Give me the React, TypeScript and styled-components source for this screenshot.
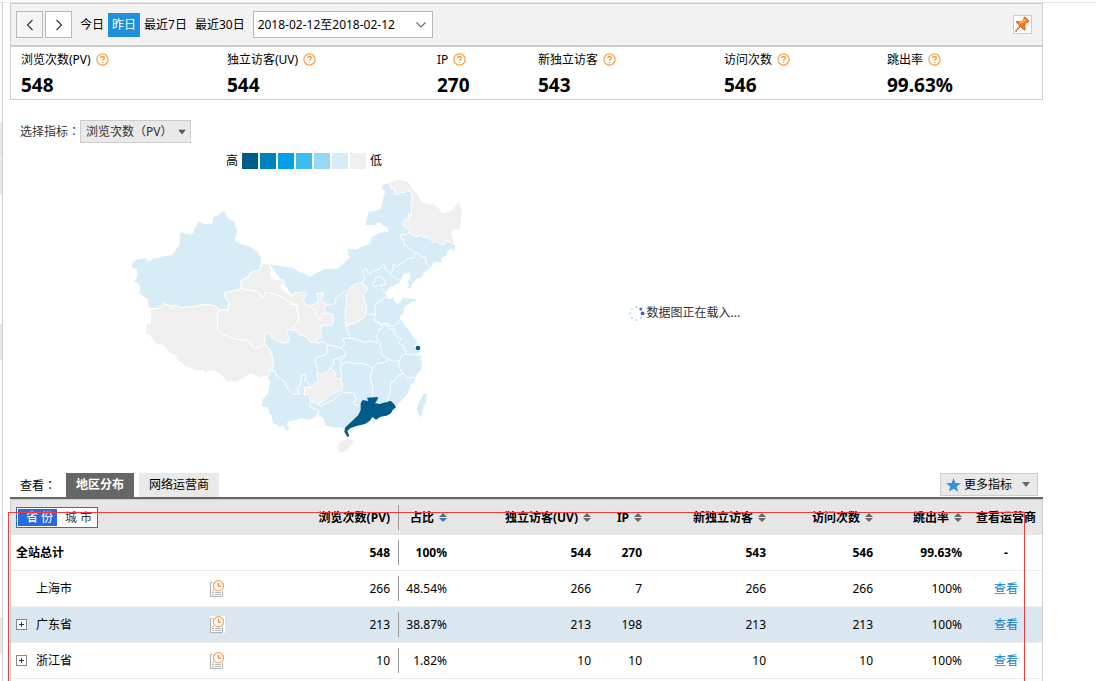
import React from "react";
import styled, { createGlobalStyle, css } from "styled-components";

const GlobalStyle = createGlobalStyle`
  *, *::before, *::after { box-sizing: border-box; }
  body {
    margin: 0;
    background: #fff;
    color: #000;
    font: 12px/16px "Noto Sans", "Noto Sans CJK SC", sans-serif;
  }
  button, select { font: inherit; color: inherit; }
`;

const Page = styled.div`
  display: flex;
  min-height: 100vh;
  padding-top: 2px;
  overflow: hidden;
`;

const Rail = styled.aside`
  flex: none;
  width: 2px;
  border-top: 1px solid #e5e5e5;
`;

const RailItem = styled.div<{ $gap: number }>`
  height: 36px;
  margin-top: ${(p) => p.$gap}px;
  background: #e8e8e8;
`;

const Main = styled.main`
  flex: 1;
  display: flex;
  flex-direction: column;
  min-width: 0;
  padding: 0 53px 0 7px;
  border-top: 1px solid #e5e5e5;
  border-left: 1px solid #ccc;
`;

const Toolbar = styled.div`
  display: flex;
  align-items: center;
  height: 44px;
  padding: 0 10px 0 5px;
  background: #f2f2f2;
  border: 1px solid #ccc;
  border-bottom-width: 2px;
`;

const StepButton = styled.button<{ $muted?: boolean }>`
  display: flex;
  align-items: center;
  justify-content: center;
  width: 27px;
  height: 27px;
  margin-right: 2px;
  padding: 0;
  background: ${(p) => (p.$muted ? "#f5f5f5" : "#fff")};
  border: 1px solid #b8b8b8;
`;

const RangeList = styled.div`
  display: flex;
  margin: 0 4px 0 2px;
`;

const RangeButton = styled.button<{ $active?: boolean }>`
  height: 24px;
  padding: 0 4px;
  border: 0;
  line-height: 24px;
  white-space: nowrap;
  background: ${(p) => (p.$active ? "#1e90dc" : "transparent")};
  color: ${(p) => (p.$active ? "#fff" : "#000")};
`;

const SelectWrap = styled.span`
  position: relative;
  display: inline-flex;
`;

const SelectArrow = styled.svg`
  position: absolute;
  top: 50%;
  right: 5px;
  transform: translateY(-50%);
  pointer-events: none;
`;

const DateSelect = styled.select`
  appearance: none;
  width: 180px;
  height: 27px;
  padding: 0 4px;
  background: #fff;
  border: 1px solid #b8b8b8;
  border-radius: 0;
`;

const PinButton = styled.button`
  display: flex;
  width: 19px;
  height: 19px;
  margin-left: auto;
  padding: 0;
  background: #fff;
  border: 1px solid #ccc;
`;

const Metrics = styled.dl`
  display: grid;
  grid-template-columns: 206fr 210fr 101fr 186fr 163fr 155fr;
  height: 53px;
  margin: 0;
  padding: 4px 0 0 10px;
  border: 1px solid #ccc;
  border-top: 0;
`;

const MetricName = styled.dt`
  display: flex;
  align-items: center;
  gap: 5px;
  height: 17px;
  white-space: nowrap;
`;

const MetricValue = styled.dd`
  margin: 4px 0 0;
  font-size: 19px;
  font-weight: 700;
  line-height: 26px;
`;

const FilterRow = styled.div`
  display: flex;
  align-items: center;
  margin-top: 20px;
  padding-left: 10px;
  color: #333;
`;

const FilterLabel = styled.label`
  width: 60px;
  white-space: nowrap;
`;

/* The TC face centres full-width punctuation in its em box. */
const Colon = styled.span`
  font-family: "Noto Sans CJK TC", sans-serif;
`;

const FilterSelect = styled.select`
  appearance: none;
  width: 111px;
  height: 23px;
  padding: 0 5px;
  background: #e9e9e9;
  border: 1px solid #ccc;
  border-radius: 0;
  font-family: "Noto Sans", "Noto Sans CJK TC", sans-serif;
`;

const Charts = styled.section`
  display: grid;
  grid-template-columns: 1fr 1fr;
  height: 320px;
  margin-top: 10px;
`;

const Legend = styled.div`
  display: flex;
  align-items: center;
  gap: 4px;
  height: 16px;
  padding-left: 216px;
`;

const Swatches = styled.div`
  display: flex;
  gap: 2px;
`;

const Swatch = styled.span<{ $color: string }>`
  width: 16px;
  height: 16px;
  background: ${(p) => p.$color};
`;

const MapSvg = styled.svg`
  display: block;
  width: 350px;
  height: 290px;
  margin: 1px 0 0 110px;
`;

const Loading = styled.div`
  display: flex;
  align-items: center;
  gap: 2px;
  padding-left: 101px;
  color: #333;
`;

const Tabs = styled.div`
  display: flex;
  align-items: flex-start;
  height: 26px;
  padding: 0 5px 0 10px;
  border-bottom: 2px solid #666;
`;

const TabsLabel = styled.span`
  width: 46px;
  line-height: 24px;
`;

const Tab = styled.button<{ $active?: boolean }>`
  height: 24px;
  margin-right: 5px;
  padding: 0 10px;
  border: 0;
  line-height: 24px;
  background: ${(p) => (p.$active ? "#666" : "#e9e9e9")};
  color: ${(p) => (p.$active ? "#fff" : "#000")};
  font-weight: ${(p) => (p.$active ? 700 : 400)};
`;

const MoreButton = styled.button`
  display: flex;
  align-items: center;
  gap: 3px;
  width: 98px;
  height: 23px;
  margin-left: auto;
  padding: 0 7px 0 5px;
  background: #e9e9e9;
  border: 1px solid #ccc;
  white-space: nowrap;

  svg:last-child { margin-left: auto; }
`;

const TableFrame = styled.section`
  position: relative;
  flex: 1;
  border: 1px solid #ccc;
  border-top: 0;
  border-bottom: 0;
`;

const Highlight = styled.div`
  position: absolute;
  top: 13px;
  bottom: -8px;
  left: -3px;
  right: 17px;
  border: 1px solid #f23a3a;
  pointer-events: none;
`;

const Table = styled.table`
  width: 100%;
  table-layout: fixed;
  border-collapse: separate;
  border-spacing: 0;
`;

const cell = css`
  height: 36px;
  padding: 0 8px 0 0;
  text-align: right;
  white-space: nowrap;
`;

const divider = css`
  background: linear-gradient(#999, #999) left center / 1px 25px no-repeat;
`;

const HeadCell = styled.th<{ $align?: string; $divided?: boolean }>`
  ${cell}
  text-align: ${(p) => p.$align ?? "right"};
  padding-left: ${(p) => (p.$align === "left" ? 5 : 0)}px;
  padding-right: ${(p) => (p.$align === "center" ? 0 : 8)}px;
  border-top: 1px solid #ccc;
  ${(p) => p.$divided && divider}
`;

const HeadRow = styled.tr`
  background: #e6e6e6;
`;

const Cell = styled.td<{ $align?: string; $divided?: boolean }>`
  ${cell}
  text-align: ${(p) => p.$align ?? "right"};
  padding-left: ${(p) => (p.$align === "left" ? 5 : 0)}px;
  padding-right: ${(p) => (p.$align === "center" ? 0 : 8)}px;
  border-bottom: 1px solid #eee;
  ${(p) => p.$divided && divider}
`;

const Row = styled.tr<{ $total?: boolean; $hover?: boolean }>`
  font-weight: ${(p) => (p.$total ? 700 : 400)};
  background: ${(p) => (p.$hover ? "#dbe7f0" : "#fff")};
`;

const SortButton = styled.button`
  display: inline-flex;
  align-items: center;
  gap: 5px;
  padding: 0;
  border: 0;
  background: none;
  font-weight: 700;
`;

const Switcher = styled.div`
  display: inline-flex;
  width: 82px;
  height: 21px;
  padding: 1px;
  background: #fff;
  border: 1px solid #2a6ae0;
  font-weight: 400;
  vertical-align: middle;
`;

const SwitchButton = styled.button<{ $active?: boolean }>`
  width: 40px;
  height: 17px;
  padding: 0 0 0 4px;
  border: 0;
  line-height: 17px;
  background: ${(p) => (p.$active ? "#2a6ae0" : "#fff")};
  color: ${(p) => (p.$active ? "#fff" : "#333")};
`;

const NameBox = styled.span`
  display: grid;
  grid-template-columns: 11px auto;
  align-items: center;
  justify-content: start;
  gap: 9px;
`;

const ExpandButton = styled.button`
  display: flex;
  width: 11px;
  height: 11px;
  padding: 0;
  background: #fff;
  border: 0;
`;

const HistorySvg = styled.svg`
  display: block;
  margin: 0 auto;
`;

const ViewLink = styled.a`
  color: #0a82cf;
  text-decoration: none;
`;

const HelpIcon = () => (
  <svg width="13" height="13" viewBox="0 0 13 13" aria-hidden="true">
    <circle cx="6.5" cy="6.5" r="5.6" fill="#fff" stroke="#f5a04a" strokeWidth="1.2" />
    <path d="M4.6 5 C4.6 3 8.5 3 8.4 5 C8.3 6.2 6.5 6.2 6.5 7.8 M6.5 8.9 V10" fill="none" stroke="#ff9a1f" strokeWidth="1.3" />
  </svg>
);

const Chevron = ({ d, color = "#333" }: { d: string; color?: string }) => (
  <svg width="12" height="12" viewBox="0 0 12 12" aria-hidden="true">
    <path d={d} fill="none" stroke={color} strokeWidth="1.1" />
  </svg>
);

const PinIcon = () => (
  <svg width="17" height="17" viewBox="0 0 17 17" aria-hidden="true">
    <path d="M1.5 15.5 L6 10.5" stroke="#c8501e" strokeWidth="1.6" strokeDasharray="2 0.6" />
    <path d="M2 5.5 L7 5.8 L10 3.6 L9.8 1.6 L11 1 L14.8 4.8 L14.2 6.2 L12.4 6.4 L10.8 9 L11.2 13.8 L10 14 L7 11 L3 7Z" fill="#f57c1c" stroke="#cf4a1a" strokeWidth="0.7" />
    <path d="M6 7.2 L10 5.2 L11.6 3.2" fill="none" stroke="#ffc06a" strokeWidth="1.4" />
  </svg>
);

const StarIcon = () => (
  <svg width="15" height="14" viewBox="0 0 15 14" aria-hidden="true">
    <path d="M7.5 0 L9.4 4.9 L15 5.2 L10.7 8.5 L12.2 13.8 L7.5 10.8 L2.8 13.8 L4.3 8.5 L0 5.2 L5.6 4.9Z" fill="#2f93da" />
  </svg>
);

const CaretIcon = () => (
  <svg width="8" height="5" viewBox="0 0 8 5" aria-hidden="true">
    <path d="M0 0 H8 L4 5Z" fill="#666" />
  </svg>
);

const SortIcon = ({ active }: { active?: boolean }) => (
  <svg width="8" height="9" viewBox="0 0 8 9" aria-hidden="true">
    <path d="M0 4 L4 0 L8 4Z" fill="#666" />
    <path d="M0 5 L4 9 L8 5Z" fill={active ? "#2a78ee" : "#666"} />
  </svg>
);

const PlusIcon = () => (
  <svg width="11" height="11" viewBox="0 0 11 11" aria-hidden="true">
    <rect x="0.5" y="0.5" width="10" height="10" fill="#fff" stroke="#888" />
    <path d="M3 5.5 H8 M5.5 3 V8" stroke="#333" />
  </svg>
);

const HistoryIcon = () => (
  <HistorySvg width="15" height="17" viewBox="0 0 15 17" aria-hidden="true">
    <rect width="15" height="17" fill="#fff" />
    <path d="M2.5 2.5 H0.5 V16.5 H12.5 V11" fill="none" stroke="#b0b0b0" />
    <path d="M2 10.5 H4 M2 12.5 H4 M5 12.5 H11 M2 14.5 H4 M5 14.5 H11" stroke="#b5b5b5" />
    <circle cx="8.5" cy="5.8" r="5.1" fill="#fff" stroke="#f6a869" strokeWidth="1.3" />
    <path d="M8.5 2.8 V6.2 H11.2" fill="none" stroke="#ee8a35" strokeWidth="1.2" />
  </HistorySvg>
);

const SpinnerIcon = () => (
  <svg width="17" height="17" viewBox="0 0 17 17" aria-hidden="true">
    <g fill="#bfdcf5">
      <circle cx="8.5" cy="2.2" r="1.2" />
      <circle cx="3.8" cy="4" r="1.1" />
      <circle cx="2" cy="8.5" r="1.2" />
      <circle cx="3.8" cy="13" r="1.2" />
      <circle cx="8.5" cy="15" r="1.2" />
      <circle cx="13" cy="13" r="1.2" />
    </g>
    <circle cx="12.8" cy="4" r="1.5" fill="#3f74cf" />
    <circle cx="14.6" cy="8.4" r="1.9" fill="#2f63c8" />
  </svg>
);

const BLUE = "#d7ecf7";
const GREY = "#efefef";
const DARK = "#005c89";

const ChinaMap = () => (
  <MapSvg viewBox="0 0 1050 870" role="img" aria-label="浏览次数(PV)">
    <g stroke="#fff" strokeWidth="3" strokeLinejoin="round">
      <path
        fill={BLUE}
        stroke="none"
        d="M448 283 L490 290 515 292 535 305 550 309 570 320 590 309 615 297 650 296 665 285 690 262 683 250 685 235 707 240 725 230 750 222 755 202 780 188 807 185 803 174 788 167 780 157 770 158 765 165 736 165 746 125 772 122 782 118 788 90 795 65 786 55 788 45 807 38 880 60 905 97 965 128 1027 115 995 190 1005 225 1004 242 1000 245 997 236 990 236 982 245 980 255 965 265 965 275 940 277 935 290 910 310 905 322 890 326 875 345 874 354 860 356 868 346 862 337 870 325 871 312 865 308 850 312 845 325 838 340 810 352 798 365 798 378 807 387 822 382 822 392 830 401 840 399 845 386 855 383 888 387 888 394 876 395 860 405 850 415 852 425 840 440 840 448 852 462 865 480 885 508 892 512 886 520 895 515 882 530 900 538 900 546 882 556 905 558 902 570 906 573 903 600 888 618 882 640 872 642 870 655 860 675 845 690 828 708 765 740 675 775 655 772 640 773 615 765 612 745 600 737 590 735 580 745 560 750 545 743 530 750 510 752 503 757 500 765 508 770 505 780 498 782 490 765 480 772 468 763 458 760 455 735 448 732 447 720 440 710 425 712 427 690 445 670 450 635 441 622 450 598 458 605 460 570 434 520 435 488 520 380Z"
      />
      <path
        fill={BLUE}
        d="M35 280 L50 268 78 263 83 272 92 270 100 264 112 263 125 258 155 254 165 240 178 222 178 187 188 186 200 191 217 191 220 178 237 152 250 160 270 162 277 158 279 140 295 134 308 122 315 124 325 145 345 155 354 185 345 205 348 215 370 223 388 227 415 247 425 265 424 280 421 300 405 303 392 308 382 324 368 328 361 340 364 356 340 363 314 367 315 380 328 400 322 422 308 418 298 420 288 408 270 405 240 405 230 410 205 411 180 413 165 405 155 410 130 401 115 415 95 418 84 408 82 388 70 380 56 370 60 355 55 342 40 335 50 322 50 298 36 296Z"
      />
      <path
        fill={GREY}
        d="M95 418 L115 415 130 401 155 410 165 405 180 413 205 411 230 410 240 405 270 405 288 408 298 420 292 435 293 480 305 492 322 498 345 508 385 511 400 533 420 531 432 522 445 532 455 550 460 575 458 602 450 600 445 622 430 617 420 625 410 620 390 612 375 622 350 636 318 636 312 625 300 612 280 602 262 604 255 618 252 602 228 602 212 594 198 592 185 578 170 570 165 555 150 550 130 525 110 525 98 510 90 498 75 490 80 460 90 462 93 445 90 425Z"
      />
      <path
        fill={GREY}
        d="M298 420 L308 418 322 422 328 400 315 380 314 367 340 363 364 356 385 360 410 364 425 378 433 380 434 367 450 370 465 372 490 383 510 398 526 403 533 425 538 450 520 470 524 481 498 478 500 490 510 505 505 515 490 520 470 512 455 502 452 490 435 488 434 522 420 531 400 533 385 511 345 508 322 498 305 492 293 480 292 435Z"
      />
      <path
        fill={GREY}
        d="M424 281 L446 282 455 300 452 315 460 327 490 330 493 338 482 348 495 365 515 380 522 369 545 368 553 363 561 372 550 385 555 403 570 410 575 405 590 400 595 385 590 372 608 368 610 380 603 388 615 400 620 404 612 415 618 430 638 432 640 462 630 467 603 465 602 485 606 500 595 505 590 517 570 517 560 500 540 495 530 485 524 481 520 470 538 450 533 425 526 403 510 398 490 383 465 372 434 367 433 380 425 378 410 364 385 360 364 356 361 340 368 328 382 324 392 308 405 303 421 300Z"
      />
      <path
        fill="none"
        d="M570 410 L585 418 590 438 598 450 606 445 604 432 615 430 M510 403 L530 403 535 430 538 445"
      />
      <g transform="translate(510 0)">
        <path
          fill={GREY}
          d="M297 38 L325 28 345 32 355 35 370 60 385 75 395 97 430 103 445 110 455 128 478 127 495 108 510 95 513 113 517 115 512 177 490 180 485 190 495 225 470 212 462 225 450 222 440 213 430 217 412 200 400 203 398 192 385 200 372 198 357 187 362 178 352 175 338 165 342 152 355 145 355 130 365 138 362 100 367 85 364 65 350 62 345 68 332 67 325 74 315 72 315 57 302 54Z"
        />
        <path
          fill={GREY}
          d="M180 355 L195 342 215 338 222 345 232 350 230 362 220 375 223 395 230 405 225 440 208 452 190 458 168 468 165 430 170 400 168 378Z"
        />
        <g fill="none">
          <path d="M357 187 L350 193 330 195 333 204 340 207 343 225 352 227 355 235 374 247 388 252 395 262 405 260 410 283 422 291" />
          <path d="M374 247 L372 263 355 265 335 280 318 290 312 282 308 285 310 297 303 310 305 316 327 330" />
          <path d="M305 312 L290 302 280 280 270 297 255 300 240 310 232 308 230 295 220 300 218 310 224 320 222 330 215 340" />
          <path d="M255 325 L270 317 275 325 285 330 285 345 270 345 258 350 247 347 248 338 256 335Z M275 345 L277 362 290 372" />
          <path d="M168 360 L150 375 137 385 137 400 120 405 108 403" />
          <path d="M290 380 L260 400 253 412 257 430 250 434 225 430 M257 430 L253 452 265 460 275 467 283 458 290 468 302 468" />
        </g>
      </g>
      <g transform="translate(510 390)">
        <g fill="none">
          <path d="M168 78 L180 72 200 68 215 58 M168 78 L175 100 182 115 200 118 225 128 240 122 262 128" />
          <path d="M253 62 L270 68 275 75 290 68 300 78 310 80 318 72 325 72 327 60" />
          <path d="M275 75 L277 85 265 88 268 98 258 108 264 125 272 128 272 145 278 152 272 160 285 172 298 178 310 185 330 180 333 168 345 162 350 152 340 148 342 138 325 130 335 115 318 110 312 90 300 88 285 70" />
          <path d="M182 115 L157 115 165 130 153 145 168 160 163 172 150 180 155 193 175 185 200 192 220 190 240 200 247 205 262 190 280 188 298 178" />
          <path d="M168 165 L150 172 130 180 132 195 118 207 M90 127 L80 132 M90 127 L100 125 112 135 M155 145 L130 137 112 135 112 150 108 165 77 172 77 190 82 205 80 220" />
          <path d="M-52 215 L-45 210 -42 225 -30 235 -15 245 -5 270 10 283 28 280 22 265 30 255 35 225 48 222 45 240 60 255" />
          <path d="M62 305 L58 320 85 330 85 342 76 348 M85 312 L90 318 130 300 155 275 175 280 190 275 200 300 190 305 195 315 215 315" />
          <path d="M152 240 L155 220 150 205 155 193 M247 205 L240 235 248 262 247 292" />
          <path d="M330 180 L325 195 332 210 340 220 320 230 312 245 302 245 300 280 292 303 M332 210 L345 225 350 235 375 232 M345 162 L372 163" />
        </g>
        <path
          fill={GREY}
          d="M80 222 L85 218 95 225 110 217 122 205 135 215 138 235 152 240 157 255 155 270 130 280 110 295 85 312 62 305 60 290 52 282 42 285 45 262 60 262 85 243Z"
        />
      </g>
    </g>
    <g transform="translate(510 390)">
      <path
        fill={DARK}
        d="M231 293 L264 291 262 300 255 310 270 312 280 308 290 307 302 302 312 312 318 322 308 330 303 340 290 347 272 350 258 359 247 351 240 362 225 372 200 378 182 384 172 393 178 408 172 411 163 395 165 383 205 345 212 330 212 310 218 300 235 303Z"
      />
      <path fill={GREY} d="M142 440 L150 425 165 419 188 419 191 424 178 443 160 457 145 455Z" />
      <path fill={BLUE} d="M410 279 L400 283 385 310 380 325 384 340 394 354 397 330 408 305Z" />
      <path fill={GREY} d="M238 374 L242 370 M245 368 L253 360 256 366 248 372Z" />
      <circle cx="384" cy="144" r="7" fill={DARK} />
    </g>
  </MapSvg>
);

const metrics = [
  ["浏览次数(PV)", "548"],
  ["独立访客(UV)", "544"],
  ["IP", "270"],
  ["新独立访客", "543"],
  ["访问次数", "546"],
  ["跳出率", "99.63%"],
];

const legendColors = ["#005c89", "#0082be", "#00a0e9", "#3dbcef", "#99d6f5", "#d7ecf7", "#efefef"];

const columnWidths = [193, 26, 168, 57, 144, 51, 124, 107, 89, 72];

const sortable = ["占比", "独立访客(UV)", "IP", "新独立访客", "访问次数", "跳出率"];

type Region = { name: string; values: string[]; kind?: "total"; expandable?: boolean; hover?: boolean };

const regions: Region[] = [
  { name: "全站总计", values: ["548", "100%", "544", "270", "543", "546", "99.63%"], kind: "total" },
  { name: "上海市", values: ["266", "48.54%", "266", "7", "266", "266", "100%"] },
  { name: "广东省", values: ["213", "38.87%", "213", "198", "213", "213", "100%"], expandable: true, hover: true },
  { name: "浙江省", values: ["10", "1.82%", "10", "10", "10", "10", "100%"], expandable: true },
];

export default function App() {
  return (
    <>
      <GlobalStyle />
      <Page>
        <Rail>
          <RailItem $gap={119} />
          <RailItem $gap={1} />
          <RailItem $gap={129} />
          <RailItem $gap={257} />
        </Rail>
        <Main>
          <Toolbar>
            <StepButton $muted aria-label="前一天"><Chevron d="M8.5 1 L3.5 6 L8.5 11" /></StepButton>
            <StepButton aria-label="后一天"><Chevron d="M3.5 1 L8.5 6 L3.5 11" /></StepButton>
            <RangeList>
              <RangeButton>今日</RangeButton>
              <RangeButton $active>昨日</RangeButton>
              <RangeButton>最近7日</RangeButton>
              <RangeButton>最近30日</RangeButton>
            </RangeList>
            <SelectWrap>
              <DateSelect aria-label="日期">
                <option>2018-02-12至2018-02-12</option>
              </DateSelect>
              <SelectArrow width="14" height="12" viewBox="0 0 14 12" aria-hidden="true">
                <path d="M2.5 3.5 L7 8 L11.5 3.5" fill="none" stroke="#666" strokeWidth="1.1" />
              </SelectArrow>
            </SelectWrap>
            <PinButton aria-label="固定"><PinIcon /></PinButton>
          </Toolbar>

          <Metrics>
            {metrics.map(([name, value]) => (
              <div key={name}>
                <MetricName>{name}<HelpIcon /></MetricName>
                <MetricValue>{value}</MetricValue>
              </div>
            ))}
          </Metrics>

          <FilterRow>
            <FilterLabel htmlFor="metric">选择指标<Colon>：</Colon></FilterLabel>
            <SelectWrap>
              <FilterSelect id="metric">
                <option>浏览次数（PV）</option>
              </FilterSelect>
              <SelectArrow width="8" height="5" viewBox="0 0 8 5" aria-hidden="true">
                <path d="M0 0 H8 L4 5Z" fill="#555" />
              </SelectArrow>
            </SelectWrap>
          </FilterRow>

          <Charts>
            <div>
              <Legend>
                <span>高</span>
                <Swatches>
                  {legendColors.map((color) => <Swatch key={color} $color={color} />)}
                </Swatches>
                <span>低</span>
              </Legend>
              <ChinaMap />
            </div>
            <Loading><SpinnerIcon />数据图正在载入...</Loading>
          </Charts>

          <Tabs>
            <TabsLabel>查看<Colon>：</Colon></TabsLabel>
            <Tab $active>地区分布</Tab>
            <Tab>网络运营商</Tab>
            <MoreButton><StarIcon />更多指标<CaretIcon /></MoreButton>
          </Tabs>

          <TableFrame>
            <Table>
              <colgroup>
                {columnWidths.map((width, i) => <col key={i} width={width} />)}
              </colgroup>
              <thead>
                <HeadRow>
                  <HeadCell $align="left" colSpan={2}>
                    <Switcher>
                      <SwitchButton $active>省 份</SwitchButton>
                      <SwitchButton>城 市</SwitchButton>
                    </Switcher>
                  </HeadCell>
                  <HeadCell>浏览次数(PV)</HeadCell>
                  {sortable.map((name, i) => (
                    <HeadCell key={name} $divided={i === 0}>
                      <SortButton>{name}<SortIcon active={i === 0} /></SortButton>
                    </HeadCell>
                  ))}
                  <HeadCell $align="center">查看运营商</HeadCell>
                </HeadRow>
              </thead>
              <tbody>
                {regions.map((region) => (
                  <Row key={region.name} $total={region.kind === "total"} $hover={region.hover}>
                    <Cell $align="left">
                      {region.kind === "total" ? region.name : (
                        <NameBox>
                          {region.expandable ? <ExpandButton aria-label="展开"><PlusIcon /></ExpandButton> : <span />}
                          {region.name}
                        </NameBox>
                      )}
                    </Cell>
                    <Cell $align="center">{region.kind !== "total" && <HistoryIcon />}</Cell>
                    {region.values.map((value, i) => (
                      <Cell key={i} $divided={i === 1}>{value}</Cell>
                    ))}
                    <Cell $align="center">
                      {region.kind === "total" ? "-" : <ViewLink href="#">查看</ViewLink>}
                    </Cell>
                  </Row>
                ))}
              </tbody>
            </Table>
            <Highlight />
          </TableFrame>
        </Main>
      </Page>
    </>
  );
}
